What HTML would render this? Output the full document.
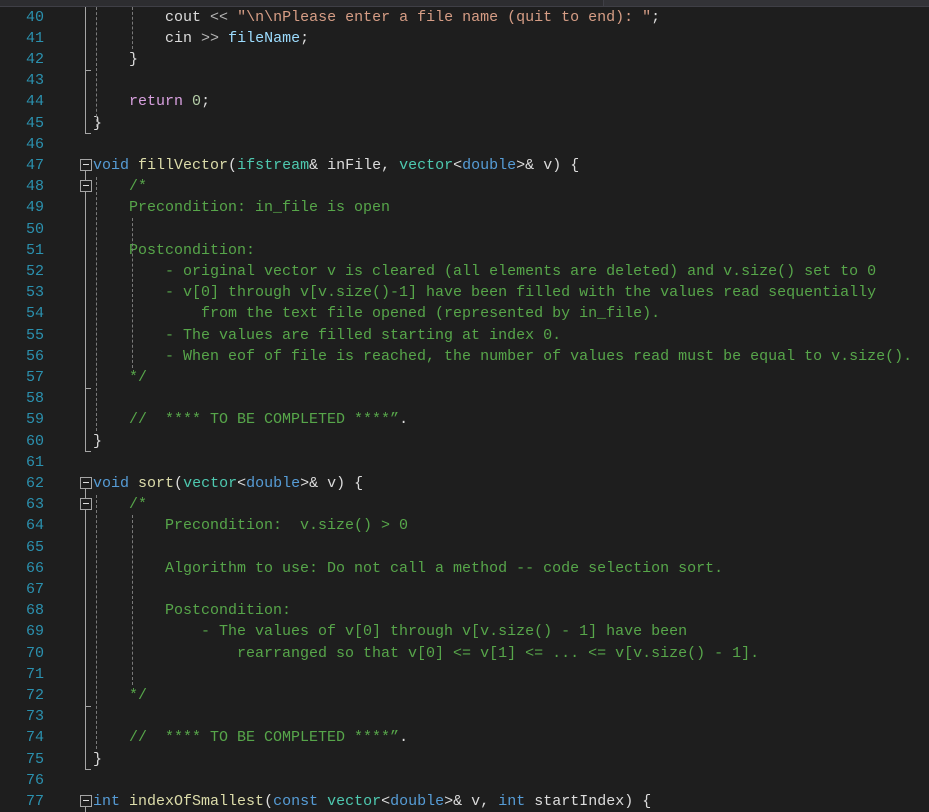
<!DOCTYPE html>
<html><head><meta charset="utf-8">
<style>
html,body{margin:0;padding:0;background:#1e1e1e;width:929px;height:812px;overflow:hidden}
#top{position:absolute;left:0;top:0;width:929px;height:6px;background:#2d2d30;border-bottom:1px solid #3f3f46}
#top .t{position:absolute;left:603px;top:0;width:326px;height:6px;border-left:1px solid #3f3f46;background:#333337}
#num{position:absolute;left:0;top:6.5px;width:44px;text-align:right;color:#2b91af}
#code{position:absolute;left:93px;top:6.5px;color:#dcdcdc;white-space:pre}
#num,#code{font-family:"Liberation Mono",monospace;font-size:15px;line-height:21.2px}
.k{color:#569cd6}.f{color:#dcdcaa}.t2{color:#4ec9b0}.p{color:#dcdcdc}.pb{color:#9cdcfe}.s{color:#d69d85}.c{color:#57a64a}.n{color:#b5cea8}.r{color:#d8a0df}.o{color:#b4b4b4}
.vl{position:absolute;width:1px;background:#a5a5a5;left:85px}
.hl{position:absolute;height:1px;background:#a5a5a5;left:85px;width:6px}
.bx{position:absolute;left:80px;width:10px;height:10px;border:1px solid #a5a5a5;background:#1e1e1e}
.bx:after{content:"";position:absolute;left:2px;top:4px;width:6px;height:1px;background:#dcdcdc}
.dg{position:absolute;width:0;border-left:1px dashed #7a7a7a}
</style></head><body>
<div id="top"><div class="t"></div></div>
<div id="num">40<br>41<br>42<br>43<br>44<br>45<br>46<br>47<br>48<br>49<br>50<br>51<br>52<br>53<br>54<br>55<br>56<br>57<br>58<br>59<br>60<br>61<br>62<br>63<br>64<br>65<br>66<br>67<br>68<br>69<br>70<br>71<br>72<br>73<br>74<br>75<br>76<br>77</div>
<div id="code">        cout <span class="o">&lt;&lt;</span> <span class="s">"\n\nPlease enter a file name (quit to end): "</span>;
        cin <span class="o">&gt;&gt;</span> <span class="pb">fileName</span>;
    }

    <span class="r">return</span> <span class="n">0</span>;
}

<span class="k">void</span> <span class="f">fillVector</span>(<span class="t2">ifstream</span>&amp; <span class="p">inFile</span>, <span class="t2">vector</span>&lt;<span class="k">double</span>&gt;&amp; <span class="p">v</span>) {
    <span class="c">/*</span>
<span class="c">    Precondition: in_file is open</span>

<span class="c">    Postcondition:</span>
<span class="c">        - original vector v is cleared (all elements are deleted) and v.size() set to 0</span>
<span class="c">        - v[0] through v[v.size()-1] have been filled with the values read sequentially</span>
<span class="c">            from the text file opened (represented by in_file).</span>
<span class="c">        - The values are filled starting at index 0.</span>
<span class="c">        - When eof of file is reached, the number of values read must be equal to v.size().</span>
<span class="c">    */</span>

    <span class="c">//  **** TO BE COMPLETED ****”</span>.
}

<span class="k">void</span> <span class="f">sort</span>(<span class="t2">vector</span>&lt;<span class="k">double</span>&gt;&amp; <span class="p">v</span>) {
    <span class="c">/*</span>
<span class="c">        Precondition:  v.size() &gt; 0</span>

<span class="c">        Algorithm to use: Do not call a method -- code selection sort.</span>

<span class="c">        Postcondition:</span>
<span class="c">            - The values of v[0] through v[v.size() - 1] have been</span>
<span class="c">                rearranged so that v[0] &lt;= v[1] &lt;= ... &lt;= v[v.size() - 1].</span>

<span class="c">    */</span>

    <span class="c">//  **** TO BE COMPLETED ****”</span>.
}

<span class="k">int</span> <span class="f">indexOfSmallest</span>(<span class="k">const</span> <span class="t2">vector</span>&lt;<span class="k">double</span>&gt;&amp; <span class="p">v</span>, <span class="k">int</span> <span class="p">startIndex</span>) {</div>

<div class="vl" style="top:7px;height:127px"></div>
<div class="hl" style="top:70px"></div>
<div class="hl" style="top:133px"></div>
<div class="dg" style="left:96px;top:7px;height:120px"></div>
<div class="dg" style="left:132px;top:7px;height:42px"></div>

<div class="vl" style="top:170px;height:282px"></div>
<div class="hl" style="top:388px"></div>
<div class="hl" style="top:451px"></div>
<div class="bx" style="top:159px"></div>
<div class="bx" style="top:180px"></div>
<div class="dg" style="left:96px;top:177px;height:254px"></div>
<div class="dg" style="left:132px;top:218px;height:150px"></div>

<div class="vl" style="top:488px;height:282px"></div>
<div class="hl" style="top:706px"></div>
<div class="hl" style="top:769px"></div>
<div class="bx" style="top:477px"></div>
<div class="bx" style="top:498px"></div>
<div class="dg" style="left:96px;top:495px;height:254px"></div>
<div class="dg" style="left:132px;top:515px;height:170px"></div>

<div class="bx" style="top:795px"></div>
<div class="vl" style="top:806px;height:6px"></div>
</body></html>
